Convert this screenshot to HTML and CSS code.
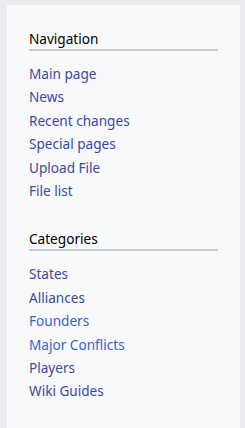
FILE: index.html
```html
<!DOCTYPE html>
<html lang="en">
<head>
    <meta charset="UTF-8">
    <meta name="viewport" content="width=device-width, initial-scale=1.0">
    <title>Sidebar</title>
    <link rel="stylesheet" href="styles.css">
</head>
<body>
    <div class="sidebar">
        <div class="portal">
            <h3>Navigation</h3>
            <ul>
                <li><a href="#" class="visited">Main page</a></li>
                <li><a href="#" class="visited">News</a></li>
                <li><a href="#" class="visited">Recent changes</a></li>
                <li><a href="#" class="visited">Special pages</a></li>
                <li><a href="#" class="visited">Upload File</a></li>
                <li><a href="#" class="visited">File list</a></li>
            </ul>
        </div>
        <div class="portal">
            <h3>Categories</h3>
            <ul>
                <li><a href="#" class="visited">States</a></li>
                <li><a href="#" class="visited">Alliances</a></li>
                <li><a href="#">Founders</a></li>
                <li><a href="#">Major Conflicts</a></li>
                <li><a href="#" class="visited">Players</a></li>
                <li><a href="#" class="visited">Wiki Guides</a></li>
            </ul>
        </div>
    </div>
</body>
</html>
```

FILE: styles.css
```css
html, body {
    height: 100%;
}
body {
    font-family: "Noto Sans", "Open Sans", sans-serif;
    font-size: 13.6px;
    background-color: #eaecf0;
    margin: 0;
    padding: 0;
}
.sidebar {
    background: #f8f9fa;
    margin: 5px 5px 0 7px;
    padding: 25px 22px 0 22px;
    min-height: calc(100% - 30px);
}
.portal {
    margin-bottom: 28px;
}
h3 {
    font-size: 13.6px;
    font-weight: normal;
    color: #000;
    margin: 0;
    line-height: 18px;
    padding-bottom: 1px;
    border-bottom: 2px solid #c8ccd1;
}
ul {
    list-style: none;
    margin: 11px 0 0 0;
    padding: 0;
}
li {
    line-height: 23.4px;
}
a {
    color: #3366cc;
    text-decoration: none;
}
a.visited {
    color: #3a4aa3;
}
```
